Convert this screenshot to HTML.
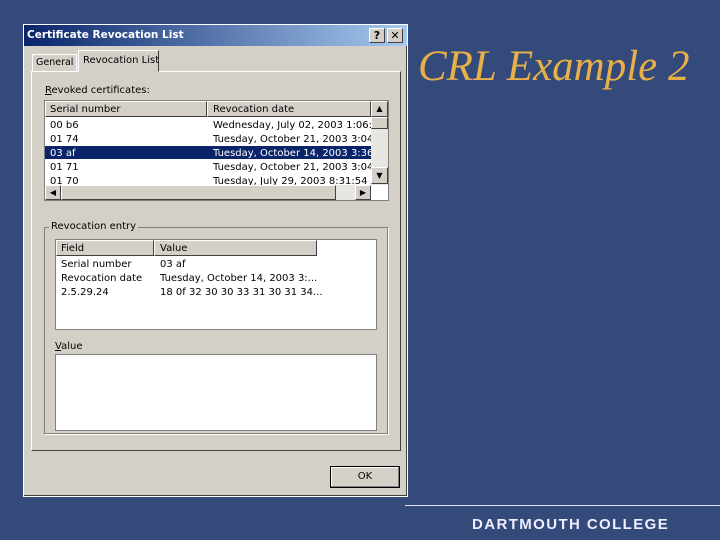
<!DOCTYPE html><html><head><style>
body{margin:0;width:720px;height:540px;background:#344a7a;position:relative;overflow:hidden;font-family:"DejaVu Sans","Liberation Sans",sans-serif;}
.a{position:absolute}
.t{font-size:10px;color:#000;white-space:nowrap;}
.dlg{left:23px;top:24px;width:385px;height:473px;background:#d4d0c8;border:1px solid #fff;box-sizing:border-box;box-shadow:inset -1px -1px #404040}
.white{background:#fff;border:1px solid #808080;box-sizing:border-box}
.btn{background:#d4d0c8;border:1px solid;border-color:#fff #404040 #404040 #fff;box-sizing:border-box}
</style></head><body>
<div class="a dlg"></div>
<div class="a" style="left:24px;top:25px;width:383px;height:21px;background:linear-gradient(90deg,#0a246a,#a6caf0)"></div>
<div class="a t" style="left:27px;top:29px;color:#fff;font-weight:bold;font-size:10.5px">Certificate Revocation List</div>
<div class="a btn" style="left:369px;top:28px;width:16px;height:15px;font-size:11px;font-weight:bold;text-align:center;line-height:13px">?</div>
<div class="a btn" style="left:387px;top:28px;width:16px;height:15px;font-size:11px;font-weight:bold;text-align:center;line-height:13px">✕</div>
<div class="a" style="left:31px;top:71px;width:370px;height:380px;border:1px solid;border-color:#fff #404040 #404040 #fff;box-sizing:border-box"></div>
<div class="a" style="left:32px;top:54px;width:45px;height:17px;border:1px solid #fff;border-bottom:none;box-sizing:border-box"></div>
<div class="a t" style="left:36px;top:57px;font-size:9.5px">General</div>
<div class="a" style="left:78px;top:50px;width:81px;height:22px;background:#d4d0c8;border:1px solid;border-color:#fff #404040 #d4d0c8 #fff;box-sizing:border-box"></div>
<div class="a t" style="left:83px;top:55px">Revocation List</div>
<div class="a t" style="left:45px;top:85px"><u>R</u>evoked certificates:</div>
<div class="a white" style="left:44px;top:100px;width:345px;height:101px"></div>
<div class="a btn" style="left:45px;top:101px;width:162px;height:16px"></div>
<div class="a btn" style="left:207px;top:101px;width:164px;height:16px"></div>
<div class="a t" style="left:50px;top:104px">Serial number</div>
<div class="a t" style="left:213px;top:104px">Revocation date</div>
<div class="a" style="left:45px;top:146px;width:326px;height:13px;background:#0a246a"></div>
<div class="a t" style="left:50px;top:119px;line-height:14px">00 b6<br>01 74<br><span style="color:#fff">03 af</span><br>01 71<br>01 70</div>
<div class="a t" style="left:213px;top:119px;line-height:14px;width:158px;overflow:hidden;height:66px">Wednesday, July 02, 2003 1:06:05<br>Tuesday, October 21, 2003 3:04:4<br><span style="color:#fff">Tuesday, October 14, 2003 3:36:3</span><br>Tuesday, October 21, 2003 3:04:4<br>Tuesday, July 29, 2003 8:31:54 AM</div>
<div class="a" style="left:371px;top:101px;width:17px;height:84px;background:#e8e6e0"></div>
<div class="a btn" style="left:371px;top:101px;width:17px;height:16px;font-size:8px;text-align:center;line-height:14px">▲</div>
<div class="a btn" style="left:371px;top:117px;width:17px;height:12px"></div>
<div class="a btn" style="left:371px;top:167px;width:17px;height:17px;font-size:8px;text-align:center;line-height:15px">▼</div>
<div class="a" style="left:45px;top:185px;width:326px;height:15px;background:#e8e6e0"></div>
<div class="a btn" style="left:45px;top:185px;width:16px;height:15px;font-size:8px;text-align:center;line-height:13px">◀</div>
<div class="a btn" style="left:61px;top:185px;width:275px;height:15px"></div>
<div class="a btn" style="left:355px;top:185px;width:16px;height:15px;font-size:8px;text-align:center;line-height:13px">▶</div>
<div class="a" style="left:44px;top:227px;width:344px;height:207px;border:1px solid #808080;box-shadow:1px 1px #fff;box-sizing:border-box"></div>
<div class="a t" style="left:49px;top:221px;background:#d4d0c8;padding:0 2px">Revocation entry</div>
<div class="a white" style="left:55px;top:239px;width:322px;height:91px"></div>
<div class="a btn" style="left:56px;top:240px;width:98px;height:16px"></div>
<div class="a btn" style="left:154px;top:240px;width:163px;height:16px"></div>
<div class="a t" style="left:61px;top:243px">Field</div>
<div class="a t" style="left:160px;top:243px">Value</div>
<div class="a t" style="left:61px;top:258px;line-height:14px">Serial number<br>Revocation date<br>2.5.29.24</div>
<div class="a t" style="left:160px;top:258px;line-height:14px">03 af<br>Tuesday, October 14, 2003 3:...<br>18 0f 32 30 30 33 31 30 31 34...</div>
<div class="a t" style="left:55px;top:341px"><u>V</u>alue</div>
<div class="a white" style="left:55px;top:354px;width:322px;height:77px"></div>
<div class="a btn" style="left:330px;top:466px;width:70px;height:22px;border:1px solid #000;box-shadow:inset -1px -1px #808080,inset 1px 1px #fff;font-size:10px;text-align:center;line-height:20px">OK</div>
<div class="a" style="left:418px;top:42px;font-family:'Liberation Serif',serif;font-style:italic;font-size:43px;color:#e8b048;white-space:nowrap">CRL Example 2</div>
<div class="a" style="left:405px;top:505px;width:315px;height:1px;background:#dde"></div>
<div class="a" style="left:472px;top:516px;font-family:'Liberation Sans',sans-serif;font-size:15px;font-weight:bold;color:#eef;letter-spacing:1.4px;white-space:nowrap">DARTMOUTH COLLEGE</div>
</body></html>
